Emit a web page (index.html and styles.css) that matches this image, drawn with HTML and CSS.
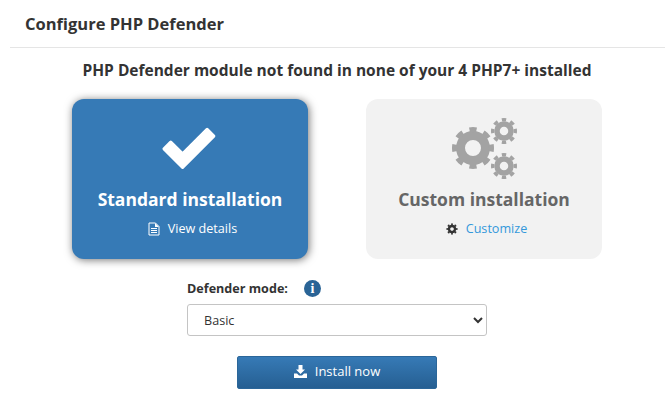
FILE: index.html
```html
<!DOCTYPE html>
<html lang="en">
<head>
  <meta charset="UTF-8" />
  <title>Configure PHP Defender</title>
  <link rel="stylesheet" href="styles.css">
</head>
<body>
  <h1 class="page-title">Configure PHP Defender</h1>
  <div class="content">
    <h2 class="notice">PHP Defender module not found in none of your 4 PHP7+ installed</h2>

    <div class="cards">
      <div class="card card-active">
        <svg class="card-icon" width="59" height="62" viewBox="0 -4 56 44">
          <polygon class="check" points="9.24,12.38 20.5,23.64 43.76,0.38 50.12,6.74 20.5,36.36 2.88,18.74" />
        </svg>
        <div class="card-title">Standard installation</div>
        <div class="card-link">
          <svg class="link-icon" width="12" height="14" viewBox="0 0 12 14">
            <path class="doc" d="M1 1h6.5L11 4.5V13H1z" />
            <path class="doc-fill" d="M7 1l4 4H7z" />
            <path class="doc" d="M3 6.5h6M3 8.5h6M3 10.5h6" />
          </svg>
          <span>View details</span>
        </div>
      </div>

      <div class="card">
        <svg class="card-icon" width="68" height="62" viewBox="-1 2 68 62">
          <g class="gear" transform="translate(22 33)">
            <circle class="gear-body" r="12.5" stroke-width="9" />
            <circle class="gear-teeth" r="18.5" stroke-width="5" pathLength="8" />
          </g>
          <g class="gear" transform="translate(53 16)">
            <circle class="gear-body" r="7" stroke-width="5.5" />
            <circle class="gear-teeth" r="11.3" stroke-width="3.4" pathLength="8" />
          </g>
          <g class="gear" transform="translate(53 51)">
            <circle class="gear-body" r="7" stroke-width="5.5" />
            <circle class="gear-teeth" r="11.3" stroke-width="3.4" pathLength="8" />
          </g>
        </svg>
        <div class="card-title card-title-muted">Custom installation</div>
        <div class="card-link card-link-blue">
          <svg class="link-icon cog-small" width="12" height="12" viewBox="-6 -6 12 12">
            <circle class="gear-body" r="3" stroke-width="2.4" />
            <circle class="gear-teeth" r="4.7" stroke-width="1.7" pathLength="8" />
          </svg>
          <span>Customize</span>
        </div>
      </div>
    </div>

    <div class="mode">
      <div class="mode-label">
        <label for="mode">Defender mode:</label>
        <span class="info">i</span>
      </div>
      <select id="mode">
        <option>Basic</option>
      </select>
    </div>

    <button class="install-btn">
      <svg width="13" height="13" viewBox="0 0 13 13">
        <path d="M4.5 0h4v4.5H11L6.5 9 2 4.5h2.5z" />
        <path d="M0 8.5h3L5 10.5h3l2-2h3V13H0z" />
      </svg>
      Install now
    </button>
  </div>
</body>
</html>
```

FILE: styles.css
```css
body {
  margin: 0;
  font-family: "Open Sans", sans-serif;
  font-size: 13px;
  color: #333;
  background: #fff;
  overflow: hidden;
}

.page-title {
  margin: 0 0 0 10px;
  padding: 14px 15px 0;
  height: 33px;
  border-bottom: 1px solid #e5e5e5;
  font-size: 16.5px;
  line-height: 20px;
  font-weight: 700;
}

.content {
  display: flex;
  flex-direction: column;
  align-items: center;
  padding-left: 9px;
}

.notice {
  margin: 12px 0 0;
  font-size: 15.5px;
  line-height: 20px;
  font-weight: 700;
}

.cards {
  display: flex;
  gap: 58px;
  margin-top: 19px;
}

.card {
  width: 236px;
  height: 160px;
  border-radius: 12px;
  background: #f2f2f2;
  display: flex;
  flex-direction: column;
  align-items: center;
}

.card-active {
  background: #367ab6;
  color: #fff;
  box-shadow: 1px 1px 8px rgba(0, 0, 0, 0.55);
}

.card-icon {
  display: block;
  height: 62px;
  margin-top: 18px;
}

.check {
  fill: #fff;
  stroke: #fff;
  stroke-width: 3;
  stroke-linejoin: round;
}

.card-title {
  margin-top: 7px;
  font-size: 17.5px;
  line-height: 26px;
  font-weight: 700;
}

.card-title-muted {
  color: #666;
}

.card-link {
  display: flex;
  align-items: center;
  gap: 8px;
  margin-top: 8px;
  padding-left: 5px;
  font-size: 12.6px;
  line-height: 18px;
}

.card-link-blue {
  color: #3498db;
}

.link-icon {
  display: block;
}

.doc {
  fill: none;
  stroke: #fff;
  stroke-width: 1;
}

.doc-fill {
  fill: #fff;
}

.gear-body {
  fill: none;
  stroke: #a3a3a3;
}

.gear-teeth {
  fill: none;
  stroke: #a3a3a3;
  stroke-dasharray: 0.5 0.5;
  stroke-dashoffset: 0.25;
}

.cog-small .gear-body,
.cog-small .gear-teeth {
  stroke: #333;
}

.mode {
  width: 300px;
  margin-top: 19px;
}

.mode-label {
  display: flex;
  align-items: center;
  gap: 16px;
  height: 20px;
  font-size: 12.6px;
  font-weight: 700;
}

.info {
  width: 17px;
  height: 17px;
  border-radius: 50%;
  background: #2a6496;
  color: #fff;
  font-family: "Liberation Serif", serif;
  font-size: 14px;
  line-height: 17px;
  text-align: center;
  font-weight: 700;
}

select {
  display: block;
  width: 300px;
  height: 32px;
  margin-top: 6px;
  padding: 0 12px;
  border: 1px solid #c4c4c4;
  border-radius: 3px;
  background: #fff;
  color: #333;
  font-family: "Open Sans", sans-serif;
  font-size: 12.6px;
}

.install-btn {
  display: flex;
  align-items: center;
  justify-content: center;
  gap: 8px;
  width: 200px;
  height: 33px;
  margin-top: 20px;
  padding: 0 0 3px;
  border: 1px solid #2b6699;
  border-radius: 2px;
  background: linear-gradient(#367ab6, #265f92);
  color: #fff;
  font-family: "Open Sans", sans-serif;
  font-size: 13px;
}

.install-btn svg {
  fill: #fff;
}
```
